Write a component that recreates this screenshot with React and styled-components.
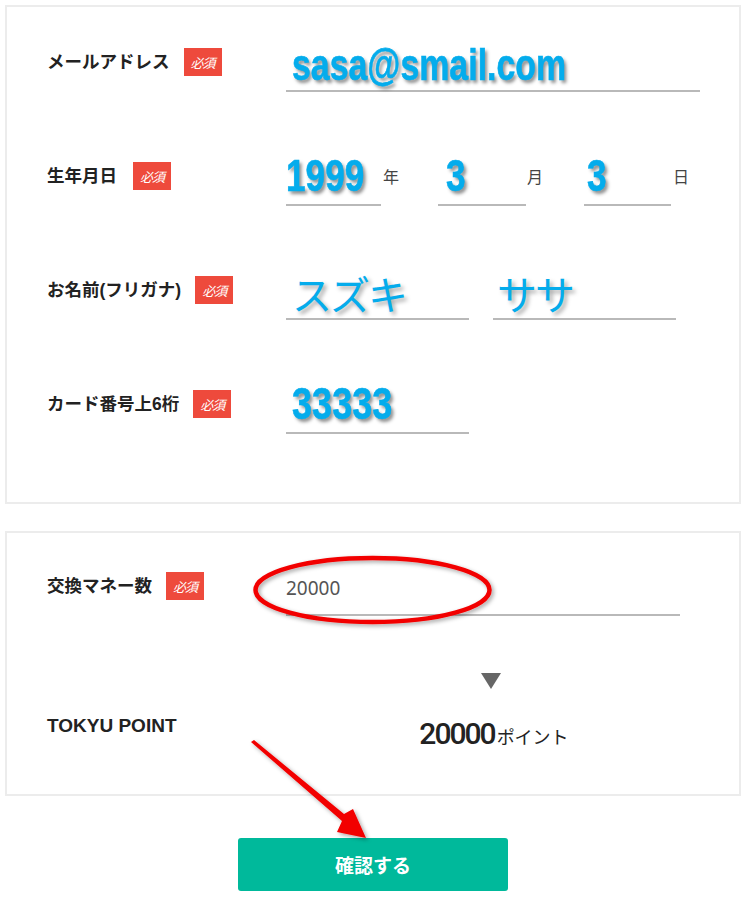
import React from "react";
import styled, { createGlobalStyle } from "styled-components";

const GlobalStyle = createGlobalStyle`
  html, body {
    margin: 0;
    padding: 0;
    background: #fff;
  }
  body {
    font-family: "Noto Sans CJK JP", "Noto Sans", sans-serif;
    color: #222;
  }
`;

const Page = styled.div`
  position: relative;
  width: 750px;
  height: 899px;
  padding: 5px 0 0 5px;
  box-sizing: border-box;
  overflow: hidden;
`;

const Panel = styled.section`
  width: 736px;
  box-sizing: border-box;
  border: 2px solid #ececec;
  padding: ${(p) => p.$pad};
  margin-top: ${(p) => p.$top || 0}px;
  display: flex;
  flex-direction: column;
  gap: ${(p) => p.$gap || 70}px;
`;

const Row = styled.div`
  display: grid;
  grid-template-columns: 239px 1fr;
  align-items: start;
`;

const LabelCell = styled.div`
  display: flex;
  align-items: center;
  height: 28px;
  gap: ${(p) => p.$gap || 14}px;
`;

const Label = styled.span`
  font-family: "Liberation Sans", "Noto Sans CJK JP", sans-serif;
  font-weight: 700;
  font-size: ${(p) => p.$size || 17.5}px;
  color: #222;
  white-space: nowrap;
  margin-bottom: ${(p) => p.$lift ?? 4}px;
`;

const Badge = styled.span`
  display: inline-flex;
  align-items: center;
  justify-content: center;
  width: 38px;
  height: 28px;
  background: #ee4a3c;
  color: #fff;
  font-family: "Noto Sans CJK JP", sans-serif;
  font-size: 13px;
  font-style: italic;
  letter-spacing: -1px;
`;

const Fields = styled.div`
  display: flex;
  align-items: flex-start;
  gap: ${(p) => p.$gap || 0}px;
`;

const Field = styled.div`
  width: ${(p) => p.$w}px;
  height: 44px;
  box-sizing: border-box;
  border-bottom: 2px solid #b9b9b9;
  display: flex;
  align-items: flex-end;
  padding-left: ${(p) => p.$indent || 0}px;
`;

const Stamp = styled.span`
  display: inline-block;
  font-family: "Liberation Sans", "DejaVu Sans", sans-serif;
  font-weight: 700;
  font-size: ${(p) => p.$size || 44}px;
  line-height: 1;
  color: #04acec;
  text-shadow: 3px 3px 4px rgba(0, 0, 0, 0.45);
  margin-bottom: ${(p) => p.$lift || 0}px;
  white-space: nowrap;
  transform: scaleX(${(p) => p.$sx || 0.77});
  transform-origin: left bottom;
  -webkit-text-stroke: 0.6px #04acec;
`;

const Kana = styled.span`
  font-family: "Noto Sans CJK JP", sans-serif;
  font-weight: 400;
  font-size: 40px;
  line-height: 1;
  color: #04acec;
  text-shadow: 3px 3px 4px rgba(0, 0, 0, 0.35);
  margin-bottom: 5px;
  letter-spacing: -2px;
`;

const Unit = styled.span`
  font-family: "Noto Sans CJK JP", sans-serif;
  font-size: 16px;
  color: #444;
  width: ${(p) => p.$w}px;
  padding-left: ${(p) => p.$pl || 2}px;
  margin-top: 4px;
  line-height: 20px;
  box-sizing: border-box;
`;

const Plain = styled.span`
  font-family: "Noto Sans", "Open Sans", sans-serif;
  font-size: 19px;
  line-height: 1;
  color: #555;
  margin-bottom: 16px;
`;

const PointRow = styled.div`
  display: grid;
  grid-template-columns: 239px 414px;
  align-items: end;
`;

const PointBox = styled.div`
  display: flex;
  flex-direction: column;
  align-items: center;
  gap: 30px;
  padding-left: 6px;
`;

const Tri = styled.span`
  width: 0;
  height: 0;
  border-left: 10px solid transparent;
  border-right: 10px solid transparent;
  border-top: 16px solid #666;
  margin-left: -10px;
`;

const Points = styled.div`
  display: flex;
  align-items: baseline;
  color: #222;
  margin-left: -4px;
`;

const PointNum = styled.span`
  font-family: Roboto, sans-serif;
  font-weight: 500;
  font-size: 30px;
  letter-spacing: -2px;
  line-height: 1;
`;

const PointUnit = styled.span`
  font-family: "Noto Sans CJK JP", sans-serif;
  font-size: 18px;
  line-height: 1;
  margin-left: 2px;
`;

const ButtonWrap = styled.div`
  display: flex;
  justify-content: center;
  width: 736px;
  margin-top: 42px;
`;

const Button = styled.button`
  width: 270px;
  height: 53px;
  border: none;
  border-radius: 3px;
  background: #00b99b;
  color: #fff;
  font-family: "Noto Sans CJK JP", sans-serif;
  font-weight: 700;
  font-size: 19px;
  cursor: pointer;
`;

const Overlay = styled.svg`
  position: absolute;
  left: 0;
  top: 0;
  pointer-events: none;
  overflow: visible;
`;

const Required = () => <Badge>必須</Badge>;

export default function App() {
  return (
    <Page>
      <GlobalStyle />
      <Panel $pad="41px 0 68px 40px">
        <Row>
          <LabelCell>
            <Label>メールアドレス</Label>
            <Required />
          </LabelCell>
          <Fields>
            <Field $w={414} $indent={6}>
              <Stamp $lift={3}>sasa@smail.com</Stamp>
            </Field>
          </Fields>
        </Row>
        <Row>
          <LabelCell $gap={16}>
            <Label>生年月日</Label>
            <Required />
          </LabelCell>
          <Fields>
            <Field $w={95} $indent={0}>
              <Stamp $lift={6} $sx={0.8}>1999</Stamp>
            </Field>
            <Unit $w={57}>年</Unit>
            <Field $w={88} $indent={8}>
              <Stamp $lift={6} $sx={0.8}>3</Stamp>
            </Field>
            <Unit $w={58} $pl={1}>月</Unit>
            <Field $w={87} $indent={3}>
              <Stamp $lift={6} $sx={0.8}>3</Stamp>
            </Field>
            <Unit $w={20}>日</Unit>
          </Fields>
        </Row>
        <Row>
          <LabelCell>
            <Label>お名前(フリガナ)</Label>
            <Required />
          </LabelCell>
          <Fields $gap={24}>
            <Field $w={183} $indent={6}>
              <Kana>スズキ</Kana>
            </Field>
            <Field $w={183} $indent={4}>
              <Kana>ササ</Kana>
            </Field>
          </Fields>
        </Row>
        <Row>
          <LabelCell>
            <Label>カード番号上6桁</Label>
            <Required />
          </LabelCell>
          <Fields>
            <Field $w={183} $indent={6}>
              <Stamp $lift={6} $sx={0.82}>33333</Stamp>
            </Field>
          </Fields>
        </Row>
      </Panel>

      <Panel $pad="39px 0 45px 40px" $top={27} $gap={57}>
        <Row>
          <LabelCell>
            <Label>交換マネー数</Label>
            <Required />
          </LabelCell>
          <Fields>
            <Field $w={394}>
              <Plain>20000</Plain>
            </Field>
          </Fields>
        </Row>
        <PointRow>
          <Label $size={19} $lift={12}>TOKYU POINT</Label>
          <PointBox>
            <Tri />
            <Points>
              <PointNum>20000</PointNum>
              <PointUnit>ポイント</PointUnit>
            </Points>
          </PointBox>
        </PointRow>
      </Panel>

      <ButtonWrap>
        <Button>確認する</Button>
      </ButtonWrap>

      <Overlay width="750" height="899" viewBox="0 0 750 899">
        <defs>
          <filter id="shade" x="-20%" y="-20%" width="140%" height="140%">
            <feDropShadow dx="2" dy="2" stdDeviation="2" floodColor="#000" floodOpacity="0.35" />
          </filter>
        </defs>
        <ellipse
          cx="372.5"
          cy="590"
          rx="117"
          ry="32"
          fill="none"
          stroke="#f20000"
          strokeWidth="4.5"
          filter="url(#shade)"
        />
        <polygon
          points="251,742 254,740 344,814 353,809 366,838 337,832 342,821"
          fill="#f20000"
          filter="url(#shade)"
        />
      </Overlay>
    </Page>
  );
}
